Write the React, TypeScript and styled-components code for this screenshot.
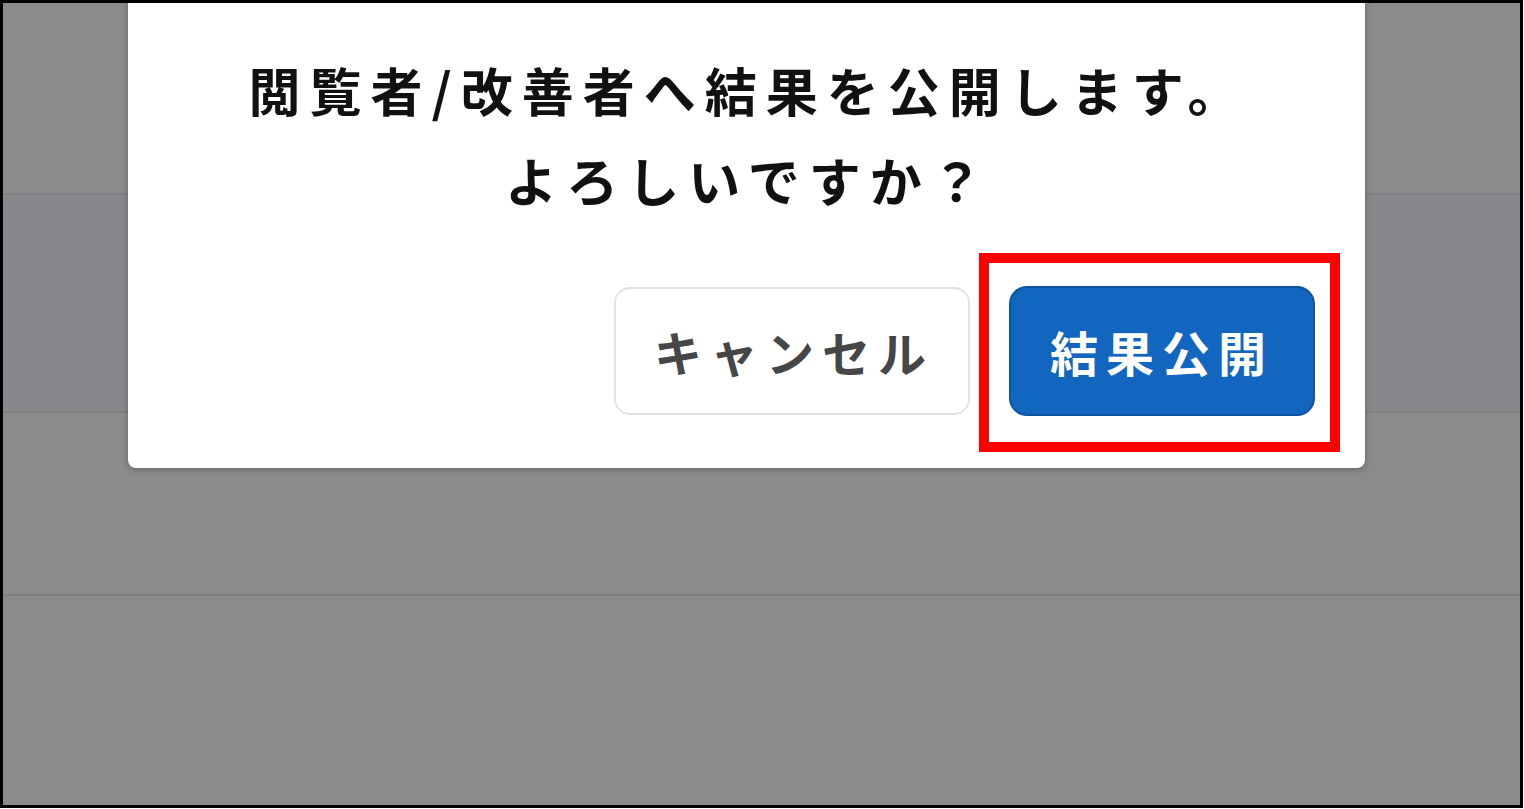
import React from "react";
import styled, { createGlobalStyle } from "styled-components";

const GlobalStyle = createGlobalStyle`
  html, body {
    margin: 0;
    padding: 0;
    background: #ffffff;
  }
  body {
    font-family: "Noto Sans CJK JP", "Noto Sans", sans-serif;
  }
`;

const Frame = styled.div`
  position: relative;
  box-sizing: border-box;
  width: 1523px;
  height: 808px;
  border: 3px solid #000;
  overflow: hidden;
  background: #8b8b8b;
`;

const Rows = styled.div`
  display: flex;
  flex-direction: column;
`;

const Row = styled.div<{ $height: number; $tint?: boolean }>`
  height: ${(p) => p.$height}px;
  background: ${(p) => (p.$tint ? "#87888c" : "#8b8b8b")};
  border-bottom: 2px solid #7f8082;
`;

const Modal = styled.div`
  position: absolute;
  left: 125px;
  top: -8px;
  width: 1237px;
  box-sizing: border-box;
  padding: 50px 50px 52px;
  background: #ffffff;
  border-radius: 8px;
  box-shadow: 0 2px 6px rgba(0, 0, 0, 0.25);
  display: flex;
  flex-direction: column;
`;

const Message = styled.p`
  margin: 0;
  text-align: center;
  font-size: 52px;
  font-weight: 700;
  line-height: 90px;
  letter-spacing: 9px;
  color: #111;
  padding-left: 4px;
`;

const Actions = styled.div`
  display: flex;
  justify-content: flex-end;
  align-items: center;
  gap: 39px;
  margin-top: 61px;
`;

const Button = styled.button<{ $primary?: boolean }>`
  box-sizing: border-box;
  height: ${(p) => (p.$primary ? 130 : 128)}px;
  width: ${(p) => (p.$primary ? 306 : 356)}px;
  padding: 0;
  border-radius: ${(p) => (p.$primary ? 18 : 16)}px;
  border: ${(p) => (p.$primary ? "2px solid #0d559f" : "2px solid #e3e3e3")};
  background: ${(p) => (p.$primary ? "#1266bf" : "#ffffff")};
  color: ${(p) => (p.$primary ? "#ffffff" : "#464646")};
  font-family: "Noto Sans CJK JP", "Noto Sans", sans-serif;
  font-size: 48px;
  font-weight: 700;
  letter-spacing: 8px;
  text-indent: ${(p) => (p.$primary ? 0 : 4)}px;
  cursor: pointer;
`;

const Highlight = styled.div`
  position: relative;
`;

const HighlightBox = styled.span`
  position: absolute;
  left: -30px;
  top: -33px;
  right: -25px;
  bottom: -36px;
  border: 10px solid #ff0000;
  pointer-events: none;
`;

export default function App() {
  return (
    <>
      <GlobalStyle />
      <Frame>
        <Rows>
          <Row $height={190} />
          <Row $height={216} $tint />
          <Row $height={181} />
        </Rows>
        <Modal>
          <Message>
            閲覧者/改善者へ結果を公開します。
            <br />
            よろしいですか？
          </Message>
          <Actions>
            <Button>キャンセル</Button>
            <Highlight>
              <Button $primary>結果公開</Button>
              <HighlightBox />
            </Highlight>
          </Actions>
        </Modal>
      </Frame>
    </>
  );
}
